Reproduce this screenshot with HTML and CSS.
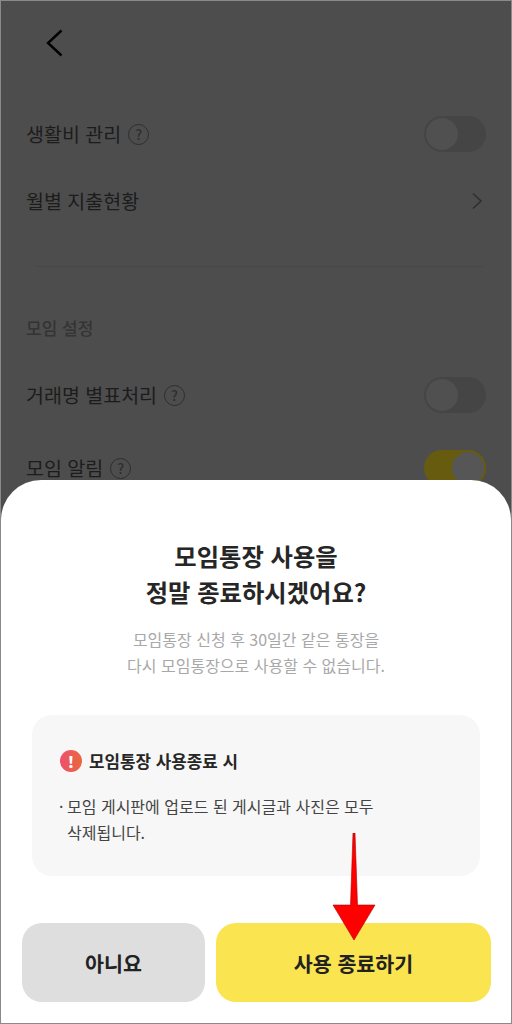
FILE: index.html
```html
<!DOCTYPE html>
<html lang="ko">
<head>
<meta charset="utf-8">
<title>모임통장 사용 종료</title>
<link rel="stylesheet" href="styles.css">
</head>
<body>
<div class="phone">
  <div class="settings">
    <header class="nav">
      <svg class="back" width="20" height="30" viewBox="0 0 20 30"><path d="M16.5 2.5 L3 15 L16.5 27.5" fill="none" stroke="#000" stroke-width="2.4"/></svg>
    </header>
    <div class="row first">
      <div class="label">생활비 관리<span class="help">?</span></div>
      <div class="toggle"><span class="thumb"></span></div>
    </div>
    <div class="row month">
      <div class="label">월별 지출현황</div>
      <svg class="chev" width="12" height="18" viewBox="0 0 12 18"><path d="M2 1.5 L10 9 L2 16.5" fill="none" stroke="#2f2f2f" stroke-width="1.6"/></svg>
    </div>
    <div class="divider"></div>
    <div class="section">모임 설정</div>
    <div class="row trade">
      <div class="label">거래명 별표처리<span class="help">?</span></div>
      <div class="toggle"><span class="thumb"></span></div>
    </div>
    <div class="row alarm">
      <div class="label">모임 알림<span class="help">?</span></div>
      <div class="toggle on"><span class="thumb"></span></div>
    </div>
  </div>
  <section class="sheet">
    <h1 class="title">모임통장 사용을<br>정말 종료하시겠어요?</h1>
    <p class="desc">모임통장 신청 후 30일간 같은 통장을<br>다시 모임통장으로 사용할 수 없습니다.</p>
    <div class="notice">
      <div class="notice-head">
        <span class="warn">!</span>
        <span>모임통장 사용종료 시</span>
      </div>
      <div class="notice-body">
        <span class="dot">·</span>
        <span>모임 게시판에 업로드 된 게시글과 사진은 모두<br>삭제됩니다.</span>
      </div>
    </div>
    <div class="actions">
      <button class="btn no">아니요</button>
      <button class="btn yes">사용 종료하기</button>
    </div>
  </section>
  <svg class="arrow" width="44" height="110" viewBox="0 0 44 110">
    <path d="M21 0 L23 0 L25.5 72 L43 72 L22 107 L1 72 L18.5 72 Z" fill="#f00" stroke="#b00000" stroke-width=".6"/>
  </svg>
</div>
</body>
</html>
```
FILE: styles.css
```css
* { box-sizing: border-box; margin: 0; padding: 0; }
html, body { width: 512px; height: 1024px; overflow: hidden; background: #fff; }
body { font-family: "Noto Sans CJK KR", "Noto Sans", sans-serif; color: #1f1f1f; }

.phone {
  position: relative;
  width: 512px;
  height: 1024px;
  overflow: hidden;
  background: #4d4d4d;
  border: 1px solid #8a8a8a;
  display: flex;
  flex-direction: column;
  justify-content: flex-end;
}

.settings {
  position: absolute;
  inset: 0;
  padding: 0 25px;
}
.nav { height: 86px; padding: 27px 0 0 19px; }
.back { display: block; }
.row { display: flex; align-items: center; justify-content: space-between; height: 40px; }
.first { margin-top: 27px; }
.month { margin-top: 27px; }
.trade { margin-top: 35px; }
.alarm { margin-top: 33px; }
.label { display: flex; align-items: center; font-size: 19.5px; line-height: 28px; color: #1c1c1c; }
.help {
  width: 21px; height: 21px; margin-left: 7px;
  border: 1.8px solid #2e2e2e; border-radius: 50%;
  display: flex; align-items: center; justify-content: center;
  font-size: 14px; font-weight: 500; line-height: 1; color: #2e2e2e;
}
.toggle {
  width: 62px; height: 36px; border-radius: 18px; background: #454545;
  display: flex; align-items: center;
}
.thumb { width: 32px; height: 32px; margin-left: 2px; border-radius: 50%; background: #505050; }
.toggle.on { background: #665b0f; justify-content: flex-end; }
.toggle.on .thumb { margin: 0 2px 0 0; background: #565656; }
.chev { margin-right: 3px; }
.divider { height: 1px; background: #484848; margin: 45px 2px 0 9px; }
.section { margin-top: 49px; font-size: 17px; line-height: 24px; font-weight: 500; color: #343434; }

.sheet {
  position: relative;
  height: 543px;
  background: #fff;
  border-radius: 40px 40px 0 0;
  padding: 58px 20px 0;
  display: flex;
  flex-direction: column;
  align-items: center;
}
.title { font-size: 24.3px; line-height: 36px; font-weight: 700; text-align: center; color: #262626; }
.desc { margin-top: 16px; font-size: 16px; line-height: 26px; text-align: center; color: #a8a8a8; }
.notice {
  margin-top: 37px;
  width: 448px;
  height: 161px;
  background: #f7f7f7;
  border-radius: 20px;
  padding: 34px 28px 0;
}
.notice-head { display: flex; align-items: center; gap: 7px; font-size: 16.85px; line-height: 24px; font-weight: 700; color: #262626; }
.warn {
  width: 22px; height: 22px; border-radius: 50%;
  background: linear-gradient(90deg, #ee4f6d, #e9683e);
  display: flex; align-items: center; justify-content: center;
  color: #fff; font-size: 16px; font-weight: 900; line-height: 1;
}
.notice-body { display: flex; margin-top: 20px; font-size: 16px; line-height: 26px; color: #444; }
.dot { width: 7px; flex: none; margin-left: -1px; margin-right: 1px; }
.actions { margin-top: 47px; margin-left: 1px; align-self: flex-start; width: 469px; display: flex; gap: 11px; }
.btn {
  height: 79px; border: 0; border-radius: 20px;
  font-family: inherit; font-size: 20.6px; font-weight: 700; color: #222;
}
.no { width: 183px; background: #dedede; }
.yes { width: 275px; background: #fae44f; }

.arrow { position: absolute; left: 331px; top: 832px; }
```
